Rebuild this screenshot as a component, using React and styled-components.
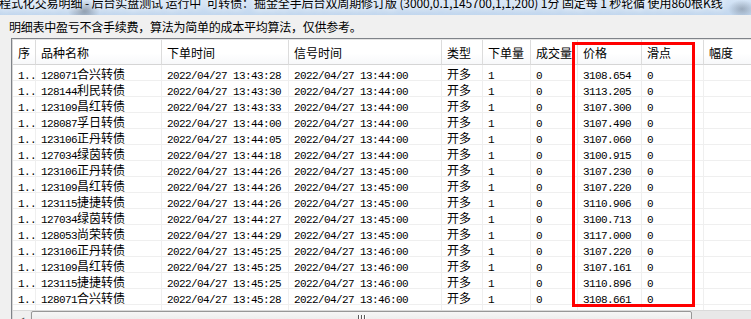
import React from "react";
import styled, { createGlobalStyle } from "styled-components";

const Global = createGlobalStyle`
  html, body { margin: 0; padding: 0; background: #f0f0f0; }
  body { font-family: "Noto Sans CJK SC", "Noto Sans", sans-serif; }
`;

const COLS = [23, 126, 127, 153, 41, 48, 47, 64, 62, 100];
const GRID = COLS.map((w) => `${w}px`).join(" ");

const Window = styled.div`
  position: relative;
  width: 751px;
  height: 319px;
  overflow: hidden;
  background: #f0f0f0;
`;

const TitleBar = styled.div`
  height: 15px;
  overflow: hidden;
  white-space: nowrap;
  background:
    radial-gradient(ellipse 16px 11px at 84px 11px, rgba(70, 78, 90, 0.45), rgba(70, 78, 90, 0) 100%),
    radial-gradient(ellipse 14px 9px at 742px 9px, rgba(70, 78, 90, 0.35), rgba(70, 78, 90, 0) 100%),
    linear-gradient(#d4e4f6, #c2d7ee);
`;

const TitleText = styled.div`
  margin: -3px 0 0 -1px;
  font-size: 12px;
  line-height: 12px;
  color: #000;
  letter-spacing: -0.1px;
  text-shadow: 0 0 6px rgba(255, 255, 255, 0.95), 0 0 10px rgba(255, 255, 255, 0.8);
`;

const Notice = styled.div`
  height: 23px;
  box-sizing: border-box;
  padding: 1px 0 0 9px;
  font-size: 12px;
  line-height: 22px;
  letter-spacing: -0.25px;
  color: #000;
  white-space: nowrap;
`;

const ListFrame = styled.div`
  margin-left: 11px;
  border-left: 1px solid #7f8389;
  border-top: 1px solid #7f8389;
`;

const ListInner = styled.div`
  border-left: 1px solid #d6d6d6;
  border-top: 1px solid #e4e4e4;
  background: #fff;
`;

const GridRow = styled.div`
  display: grid;
  grid-template-columns: ${GRID};
`;

const HeadCell = styled.div`
  box-sizing: border-box;
  height: 25px;
  padding: 2px 0 0 5px;
  line-height: 22px;
  font-size: 12px;
  color: #000;
  white-space: nowrap;
  overflow: hidden;
  background: linear-gradient(#ffffff 0%, #ffffff 55%, #f7f8fa 100%);
  border-right: 1px solid #dcdcdc;
  border-bottom: 1px solid #d5d5d5;
`;

const Cell = styled.div`
  box-sizing: border-box;
  height: ${(p) => (p.$filler ? 5 : 16)}px;
  padding: 1px 0 0 5px;
  line-height: 15px;
  font-size: 12px;
  color: #000;
  white-space: nowrap;
  overflow: hidden;
  border-right: 1px solid #efefef;
  border-bottom: ${(p) => (p.$filler ? "none" : "1px solid #efefef")};
`;

const Num = styled.span`
  font-family: "Liberation Mono", monospace;
  font-size: 11px;
  letter-spacing: -0.6px;
`;

const HScroll = styled.div`
  display: flex;
  height: 17px;
  background: #e8e8e8;
  border-top: 1px solid #dadada;
`;

const ArrowButton = styled.div`
  width: 17px;
  display: flex;
  align-items: center;
  justify-content: center;
  color: #555;
  font-size: 7px;
  background: #f0f0f0;
`;

const Thumb = styled.div`
  width: 661px;
  margin-left: 1px;
  box-sizing: border-box;
  border: 1px solid #979797;
  border-radius: 2px;
  background: linear-gradient(#f6f6f6, #e4e4e4);
  display: flex;
  justify-content: center;
  padding-top: 3px;
`;

const Grip = styled.div`
  display: flex;
  gap: 1px;
  height: 8px;
`;

const GripLine = styled.div`
  width: 1px;
  background: #5b5b5b;
  box-shadow: 1px 0 0 #ffffff;
  margin-right: 1px;
`;

const Highlight = styled.div`
  position: absolute;
  left: 572px;
  top: 42px;
  width: 123px;
  height: 265px;
  box-sizing: border-box;
  border: 3px solid #ff0000;
  pointer-events: none;
`;

const HEADERS = ["序", "品种名称", "下单时间", "信号时间", "类型", "下单量", "成交量", "价格", "滑点", "幅度"];

const DATA = [
  ["128071", "合兴转债", "13:43:28", "13:44:00", "3108.654"],
  ["128144", "利民转债", "13:43:30", "13:44:00", "3113.205"],
  ["123109", "昌红转债", "13:43:33", "13:44:00", "3107.300"],
  ["128087", "孚日转债", "13:44:00", "13:44:00", "3107.490"],
  ["123106", "正丹转债", "13:44:05", "13:44:00", "3107.060"],
  ["127034", "绿茵转债", "13:44:18", "13:44:00", "3100.915"],
  ["123106", "正丹转债", "13:44:26", "13:45:00", "3107.230"],
  ["123109", "昌红转债", "13:44:26", "13:45:00", "3107.220"],
  ["123115", "捷捷转债", "13:44:26", "13:45:00", "3110.906"],
  ["127034", "绿茵转债", "13:44:27", "13:45:00", "3100.713"],
  ["128053", "尚荣转债", "13:44:29", "13:45:00", "3117.000"],
  ["123106", "正丹转债", "13:45:25", "13:46:00", "3107.220"],
  ["123109", "昌红转债", "13:45:25", "13:46:00", "3107.161"],
  ["123115", "捷捷转债", "13:45:25", "13:46:00", "3110.896"],
  ["128071", "合兴转债", "13:45:28", "13:46:00", "3108.661"],
];

const DATE = "2022/04/27";

export default function App() {
  return (
    <>
      <Global />
      <Window>
        <TitleBar>
          <TitleText>
            程式化交易明细 - 后台实盘测试 运行中&nbsp;&nbsp;可转债：掘金全手后台双周期修订版 (3000,0.1,145700,1,1,200) 1分 固定每 1 秒轮循 使用860根K线
          </TitleText>
        </TitleBar>
        <Notice>明细表中盈亏不含手续费，算法为简单的成本平均算法，仅供参考。</Notice>
        <ListFrame>
          <ListInner>
            <GridRow>
              {HEADERS.map((h) => (
                <HeadCell key={h}>{h}</HeadCell>
              ))}
            </GridRow>
            {DATA.map(([code, name, t1, t2, price], i) => (
              <GridRow key={i}>
                <Cell><Num>1..</Num></Cell>
                <Cell><Num>{code}</Num>{name}</Cell>
                <Cell><Num>{`${DATE} ${t1}`}</Num></Cell>
                <Cell><Num>{`${DATE} ${t2}`}</Num></Cell>
                <Cell>开多</Cell>
                <Cell><Num>1</Num></Cell>
                <Cell><Num>0</Num></Cell>
                <Cell><Num>{price}</Num></Cell>
                <Cell><Num>0</Num></Cell>
                <Cell />
              </GridRow>
            ))}
            <GridRow>
              {COLS.map((_, i) => (
                <Cell key={i} $filler />
              ))}
            </GridRow>
            <HScroll>
              <ArrowButton>◀</ArrowButton>
              <Thumb>
                <Grip>
                  <GripLine />
                  <GripLine />
                  <GripLine />
                </Grip>
              </Thumb>
            </HScroll>
          </ListInner>
        </ListFrame>
        <Highlight />
      </Window>
    </>
  );
}
